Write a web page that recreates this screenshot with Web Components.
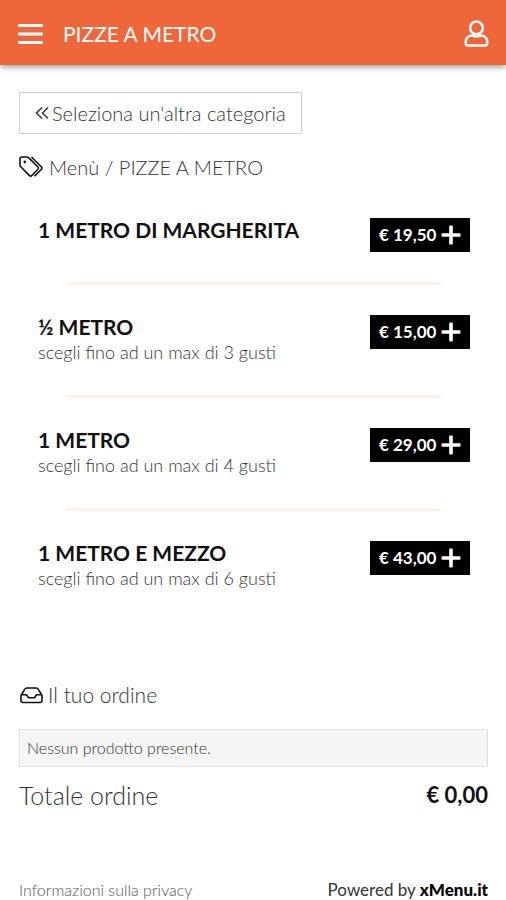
<!DOCTYPE html>
<html lang="it">
<head>
<meta charset="utf-8">
<meta name="viewport" content="width=device-width, initial-scale=1">
<title>PIZZE A METRO</title>
<style>
  body { margin: 0; background: #fff; color: #333; font-family: "Century Gothic", Lato, sans-serif; font-weight: 300; }
</style>
</head>
<body>
<menu-page>
  <app-header slot="header">PIZZE A METRO</app-header>
  <category-nav>PIZZE A METRO</category-nav>
  <menu-list>
    <menu-item price="19,50">1 METRO DI MARGHERITA</menu-item>
    <menu-item price="15,00">½ METRO<span slot="note">scegli fino ad un max di 3 gusti</span></menu-item>
    <menu-item price="29,00">1 METRO<span slot="note">scegli fino ad un max di 4 gusti</span></menu-item>
    <menu-item price="43,00">1 METRO E MEZZO<span slot="note">scegli fino ad un max di 6 gusti</span></menu-item>
  </menu-list>
  <order-summary total="0,00">Nessun prodotto presente.</order-summary>
  <page-footer slot="footer"></page-footer>
</menu-page>

<script>
const base = `*{box-sizing:border-box} button{font:inherit;border:0;margin:0;cursor:pointer} svg{display:block;flex:none} h1,h2,h3,p{margin:0;font-size:inherit;font-weight:inherit}`;
function element(name, view) {
  customElements.define(name, class extends HTMLElement {
    constructor() {
      super();
      this.attachShadow({ mode: "open" }).innerHTML = "<style>" + base + "</style>" + view(this);
    }
  });
}

element("menu-page", () => `
<style>
  :host { display: flex; flex-direction: column; min-height: 100vh; }
  main { flex: 1; padding: 27px 18px 0 19px; }
</style>
<slot name="header"></slot><main><slot></slot></main><slot name="footer"></slot>`);

element("app-header", () => `
<style>
  :host { display: block; }
  header { display: flex; align-items: center; height: 65px; padding: 2px 17px 0 18px; background: #ef663a; color: #fff; box-shadow: 0 2px 6px rgba(0,0,0,.4); }
  button { background: none; color: inherit; padding: 0; }
  h1 { flex: 1; margin-left: 20px; font-size: 21px; line-height: 32px; font-weight: 400; }
</style>
<header>
  <button type="button" aria-label="Apri menù"><svg width="25" height="24" viewBox="0 0 25 24" fill="#fff"><rect y="2" width="25" height="3" rx=".5"/><rect y="10.500" width="25" height="3" rx=".5"/><rect y="19" width="25" height="3" rx=".5"/></svg></button>
  <h1><slot></slot></h1>
  <button type="button" aria-label="Profilo"><svg width="25" height="28" viewBox="0 0 26 30" fill="none" stroke="#fff" stroke-width="2.700"><circle cx="13" cy="8.500" r="6.800"/><path d="M8.700 16.700c1.700.7 2.800 1 4.300 1s2.600-.3 4.300-1c4.600 0 7.200 2.700 7.200 6.600v1.600c0 1.500-.8 2.300-2.300 2.300H3.800c-1.500 0-2.300-.8-2.300-2.300v-1.600c0-3.900 2.600-6.600 7.200-6.600z"/></svg></button>
</header>`);

element("category-nav", () => `
<style>
  :host { display: block; }
  .back { display: flex; align-items: center; gap: 3px; height: 42px; padding: 0 15px; border: 1px solid #d0d0d0; background: #fff; color: #333; font-size: 20px; line-height: 24px; }
  nav { display: flex; align-items: center; gap: 6px; margin-top: 20px; font-size: 20px; line-height: 26px; }
  a { color: inherit; text-decoration: none; }
</style>
<button type="button" class="back"><svg width="14" height="14" viewBox="0 0 14 14" fill="none" stroke="#333" stroke-width="1.500"><path d="M7 1.500 1.500 7 7 12.500M13 1.500 7.500 7 13 12.500"/></svg><span>Seleziona un'altra categoria</span></button>
<nav><svg width="24" height="22" viewBox="0 0 24 22" fill="none" stroke="#111" stroke-width="1.600" stroke-linejoin="round"><path d="M1 3v7l9.500 9.600c.7.700 1.500.7 2.200 0l6.300-6.400c.7-.7.700-1.500 0-2.200L9.800 1.900C9.300 1.300 8.700 1 8 1H3Q1 1 1 3zM12.500 1l10 10c.7.700.7 1.500 0 2.200l-7 7"/><circle cx="5.800" cy="5.900" r="1.300" fill="#111" stroke="none"/></svg><h2><a href="#menu">Menù</a> / <slot></slot></h2></nav>`);

element("menu-list", () => `
<style>
  :host { display: block; padding-top: 8px; }
</style><slot></slot>`);

element("menu-item", el => `
<style>
  :host { display: block; }
  article { display: flex; align-items: flex-start; justify-content: space-between; padding: 30px 18px 30px 19px; }
  h3 { font-size: 21px; line-height: 24px; font-weight: 700; color: #111; }
  p { font-size: 18px; line-height: 26px; }
  button { display: flex; align-items: center; justify-content: space-between; width: 100px; height: 34px; padding: 0 9px; background: #000; color: #fff; font-size: 17px; line-height: 24px; font-weight: 700; white-space: nowrap; }
  hr { width: 80%; height: 3px; margin: 0 auto; border: 0; background: #fdf1eb; }
  :host(:last-child) hr { display: none; }
</style>
<article><div><h3><slot></slot></h3><p><slot name="note"></slot></p></div>
<button type="button"><span>€ ${el.getAttribute("price")}</span><svg width="20" height="20" viewBox="0 0 20 20" fill="#fff"><path d="M8.200 1.500q0-1 1-1h1.600q1 0 1 1v6.800h6.700q1 0 1 1v1.400q0 1-1 1h-6.700v6.800q0 1-1 1H9.200q-1 0-1-1v-6.800H1.500q-1 0-1-1V9.300q0-1 1-1h6.700z"/></svg></button></article><hr>`);

element("order-summary", el => `
<style>
  :host { display: block; padding-top: 61px; }
  h2 { display: flex; align-items: center; gap: 5px; font-size: 21px; line-height: 26px; padding-left: 1px; }
  .empty { margin-top: 21px; padding: 0 7px; border: 1px solid #e0e0e0; background: #f5f5f5; font-size: 16px; line-height: 36px; }
  .total { display: flex; justify-content: space-between; margin-top: 12px; font-size: 25px; line-height: 32px; }
  strong { font-size: 22px; font-weight: 700; color: #111; }
</style>
<h2><svg width="23" height="17" viewBox="0 0 23 17" fill="none" stroke="#111" stroke-width="1.600" stroke-linejoin="round"><path d="M1 8.500 4.700 2.300Q5.400 1 6.800 1h9.400q1.400 0 2.100 1.300L22 8.500v5q0 2-2 2H3q-2 0-2-2zM1.800 7.800h4.700l2 3h6l2-3h4.700"/></svg><span>Il tuo ordine</span></h2>
<p class="empty"><slot></slot></p>
<div class="total"><span>Totale ordine</span><strong>€ ${el.getAttribute("total")}</strong></div>`);

element("page-footer", () => `
<style>
  :host { display: block; }
  footer { display: flex; justify-content: space-between; align-items: baseline; padding: 0 18px 0 19px; font-size: 16px; line-height: 20px; }
  a { color: #555; text-decoration: none; }
  .brand { color: #333; font-size: 17px; font-weight: 400; }
  strong { font-weight: 900; color: #000; }
</style>
<footer><a href="#privacy">Informazioni sulla privacy</a><a class="brand" href="#xmenu">Powered by <strong>xMenu.it</strong></a></footer>`);
</script>
</body>
</html>
